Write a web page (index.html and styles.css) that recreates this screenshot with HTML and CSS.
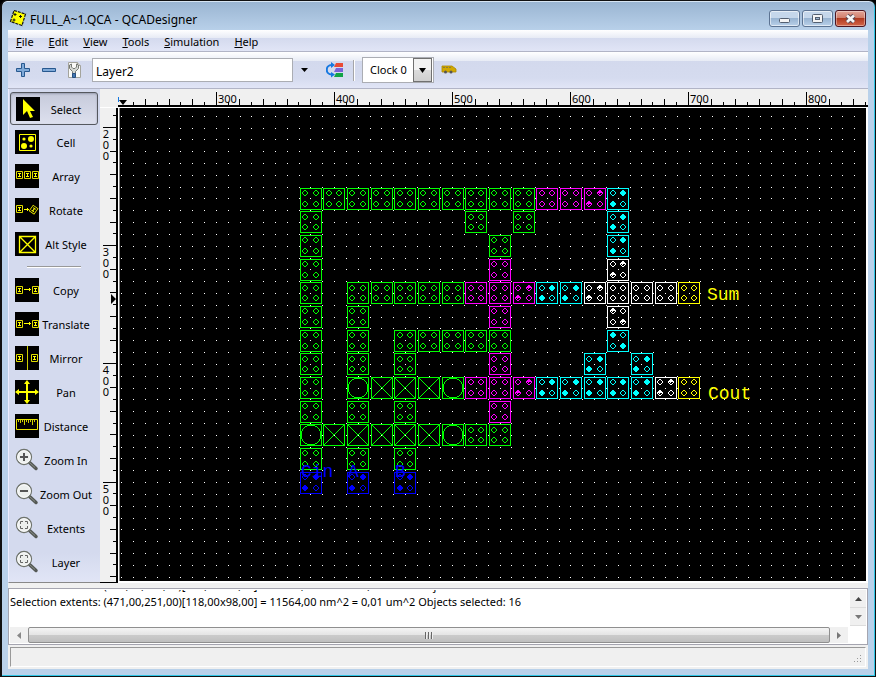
FILE: index.html
```html
<!DOCTYPE html>
<html lang="en">
<head>
<meta charset="utf-8">
<title>FULL_A~1.QCA - QCADesigner</title>
<link rel="stylesheet" href="styles.css">
</head>
<body>
<svg class="defs" aria-hidden="true">
  <symbol id="mini" viewBox="0 0 7 8"><path d="M.5 .5h6v7h-6z" fill="none" stroke="#e0dc00"/><path d="M2 2h3v1h-1v2h1v1h-3v-1h1v-2h-1z" fill="#ff0"/></symbol>
  <symbol id="lens" viewBox="0 0 24 24">
    <path d="M14.5 14.5l6.500 6" stroke="#555955" stroke-width="3.500" stroke-linecap="round"/>
    <path d="M15 15l5 4.500" stroke="#888d86" stroke-width="1"/>
    <circle cx="9" cy="9" r="7.500" fill="#ecefed" stroke="#6f746d" stroke-width="1.300"/>
    <circle cx="9" cy="9" r="6.300" fill="none" stroke="#fff"/>
  </symbol>
</svg>
<div class="window">
  <header class="titlebar">
    <svg class="logo" width="18" height="18" viewBox="0 0 18 18"><path d="M5 1.500L16.500 5 13 16.500 1.500 12.500z" fill="#ff0" stroke="#111" stroke-width="1.200" stroke-dasharray="3 1"/><path d="M6 4v3M4.500 5.500h3M11.500 6v3M10 7.500h3M5 9.500v3M3.500 11h3" stroke="#111"/></svg>
    <h1>FULL_A~1.QCA - QCADesigner</h1>
    <div class="controls">
      <button aria-label="Minimize"><svg width="29" height="15"><rect x="9.500" y="7.500" width="10" height="4" rx="1" fill="#f4f4f4" stroke="#535f70"/></svg></button>
      <button aria-label="Maximize"><svg width="29" height="15"><rect x="9.500" y="3.500" width="10" height="8" rx="1" fill="#f4f4f4" stroke="#535f70"/><rect x="12.500" y="6.500" width="4" height="2" fill="#9db5d0" stroke="#535f70"/></svg></button>
      <button class="close" aria-label="Close"><svg width="29" height="15"><path d="M11 4.500l7 6.500M18 4.500l-7 6.500" stroke="#5a4a56" stroke-width="4.500"/><path d="M11 4.500l7 6.500M18 4.500l-7 6.500" stroke="#f6f6f6" stroke-width="2.700"/></svg></button>
    </div>
  </header>
  <div class="client">
    <nav class="menubar">
      <a href="#"><u>F</u>ile</a><a href="#"><u>E</u>dit</a><a href="#"><u>V</u>iew</a><a href="#"><u>T</u>ools</a><a href="#"><u>S</u>imulation</a><a href="#"><u>H</u>elp</a>
    </nav>
    <div class="toolbar">
      <button class="flat" aria-label="Add layer"><svg width="16" height="16"><path d="M6.500 1.500h3v5h5v3h-5v5h-3v-5h-5v-3h5z" fill="#7fa9d8" stroke="#27588f"/></svg></button>
      <button class="flat" aria-label="Remove layer"><svg width="16" height="16"><path d="M1.500 6.500h13v3h-13z" fill="#7fa9d8" stroke="#27588f"/></svg></button>
      <button class="flat" aria-label="Layer properties"><svg width="16" height="18"><path d="M1.500 1.500h9l3 3v12h-12z" fill="#fafaf8" stroke="#a4a49c"/><path d="M10.500 1.500v3h3" fill="#ddd" stroke="#a4a49c"/><path d="M2.500 4v3.500l3 3v2h3v-2l3-3V4l-2-1v3L8 7.500H6L4.500 6V3z" fill="#d5d8d4" stroke="#777a75"/><path d="M5.500 12.500h3v4h-3z" fill="#4477b0" stroke="#274f80"/></svg></button>
      <input class="layer" aria-label="Layer" value="Layer2">
      <button class="flat arrow" aria-label="Choose layer"><svg width="7" height="4"><path d="M0 0h7L3.500 4z"/></svg></button>
      <button class="flat sync" aria-label="Reorder layers"><svg width="18" height="16" viewBox="0 0 18 16"><path d="M10 1h7v4H8z" fill="#e94b35"/><path d="M10 6h7v4H8z" fill="#7a62d8"/><path d="M10 11h7v4H8z" fill="#12a346"/><path d="M5.500 3A4.500 4.500 0 0 0 5.500 12.500" fill="none" stroke="#1678e0" stroke-width="2"/><path d="M5 0l4 3-4 3zM5 10l4 2.500-4 3z" fill="#1678e0"/></svg></button>
      <span class="divider"></span>
      <div class="combo"><select aria-label="Clock"><option>Clock 0</option></select><span class="drop"><svg width="7" height="5"><path d="M0 0h7L3.500 5z"/></svg></span></div>
      <button class="flat" aria-label="Bus layout"><svg width="16" height="10"><path d="M1 1h10l4 3v3H1z" fill="#d2a800" stroke="#a98800" stroke-width=".8"/><path d="M2 2.500h2M5 2.500h2M8 2.500h2" stroke="#8c7d3a"/><circle cx="4.500" cy="7" r="1.500" fill="#555"/><circle cx="10" cy="7" r="1.500" fill="#555"/></svg></button>
    </div>
    <main class="work">
      <aside class="tools">
        <button class="selected"><svg class="ic" viewBox="0 0 24 24"><path d="M7 2v16l4-4 3 7 3-1-3-6h5z" fill="#ff0"/></svg><span>Select</span></button>
        <button><svg class="ic" viewBox="0 0 24 24"><path d="M4.500 4.500h16v16h-16z" fill="none" stroke="#ff0"/><circle cx="16" cy="9" r="3" fill="#ff0"/><circle cx="9" cy="16" r="3" fill="#ff0"/><circle cx="9" cy="9" r="1.600" fill="#ff0"/><circle cx="16" cy="16" r="1.600" fill="#ff0"/></svg><span>Cell</span></button>
        <button><svg class="ic" viewBox="0 0 24 24"><use href="#mini" x="1" y="7" width="7" height="8"/><use href="#mini" x="9" y="7" width="7" height="8"/><use href="#mini" x="17" y="7" width="7" height="8"/></svg><span>Array</span></button>
        <button><svg class="ic" viewBox="0 0 24 24"><use href="#mini" x="1" y="7" width="7" height="8"/><path d="M9 11.500h5M12.500 10v3" stroke="#ff0"/><use href="#mini" x="15" y="8" width="7" height="8" transform="rotate(35 19 12)"/></svg><span>Rotate</span></button>
        <button><svg class="ic" viewBox="0 0 24 24"><path d="M4.500 4.500h16v16h-16zl16 16m0-16l-16 16" fill="none" stroke="#ff0" stroke-width="1.300"/></svg><span>Alt Style</span></button>
        <hr>
        <button><svg class="ic" viewBox="0 0 24 24"><use href="#mini" x="1" y="8" width="7" height="8"/><path d="M9 11.500h7M14.500 10v3" stroke="#ff0"/><use href="#mini" x="17" y="8" width="7" height="8"/></svg><span>Copy</span></button>
        <button><svg class="ic" viewBox="0 0 24 24"><use href="#mini" x="1" y="8" width="7" height="8"/><path d="M9 11.500h7M14.500 10v3" stroke="#ff0"/><use href="#mini" x="17" y="8" width="7" height="8"/></svg><span>Translate</span></button>
        <button><svg class="ic" viewBox="0 0 24 24"><use href="#mini" x="1" y="8" width="7" height="8"/><path d="M12.500 0v24" stroke="#cc0"/><use href="#mini" x="16" y="8" width="7" height="8"/></svg><span>Mirror</span></button>
        <button><svg class="ic" viewBox="0 0 24 24"><path d="M12 2v20M2 12h20" stroke="#ff0" stroke-width="2"/><path d="M12 0l3 4H9zM12 24l3-4H9zM0 12l4-3v6zM24 12l-4-3v6z" fill="#ff0"/></svg><span>Pan</span></button>
        <button><svg class="ic" viewBox="0 0 24 24"><path d="M1.500 5.500h21v10h-21z" fill="none" stroke="#e8e400"/><path d="M3.500 6v2M5.500 6v3M7.500 6v2M9.500 6v5M11.500 6v2M13.500 6v3M15.500 6v2M17.500 6v5M19.500 6v2" stroke="#cc0"/></svg><span>Distance</span></button>
        <button><svg class="ic clear" viewBox="0 0 24 24"><use href="#lens"/><path d="M9 5v8M5 9h8" stroke="#555" stroke-width="2"/></svg><span>Zoom In</span></button>
        <button><svg class="ic clear" viewBox="0 0 24 24"><use href="#lens"/><path d="M5 9h8" stroke="#555" stroke-width="2"/></svg><span>Zoom Out</span></button>
        <button><svg class="ic clear" viewBox="0 0 24 24"><use href="#lens"/><path d="M5.500 8V5.500H8M10 5.500h2.500V8M12.500 10v2.500H10M8 12.500H5.500V10" fill="none" stroke="#666"/></svg><span>Extents</span></button>
        <button><svg class="ic clear" viewBox="0 0 24 24"><use href="#lens"/><path d="M5.500 8V5.500H8M10 5.500h2.500V8M12.500 10v2.500H10M8 12.500H5.500V10" fill="none" stroke="#666"/></svg><span>Layer</span></button>
      </aside>
      <div class="design">
        <svg id="hruler" class="hruler"></svg>
        <svg id="vruler" class="vruler"></svg>
        <div class="sheet"><svg id="sheet"></svg></div>
      </div>
    </main>
    <section class="log" aria-label="Messages">
      <div class="logrow">
        <div class="lines"><p>Selection extents: (471,00,251,00)[118,00x98,00] = 11564,00 nm^2 = 0,01 um^2 Objects selected: 16</p><p>Selection extents: (471,00,251,00)[118,00x98,00] = 11564,00 nm^2 = 0,01 um^2 Objects selected: 16</p></div>
        <div class="vscroll"><button aria-label="Scroll up"><svg width="7" height="4"><path d="M3.500 0L7 4H0z" fill="#444"/></svg></button><button aria-label="Scroll down"><svg width="7" height="4"><path d="M0 0h7L3.500 4z" fill="#777"/></svg></button></div>
      </div>
      <div class="hscroll"><button aria-label="Scroll left"><svg width="4" height="7"><path d="M4 0v7L0 3.500z" fill="#888"/></svg></button><div class="thumb"><i></i><i></i><i></i></div><button aria-label="Scroll right"><svg width="4" height="7"><path d="M0 0v7l4-3.500z" fill="#777"/></svg></button></div>
    </section>
    <footer class="status"><svg width="8" height="8"><path d="M6 0h1v1h-1zM3 3h1v1h-1zM6 3h1v1h-1zM0 6h1v1h-1zM3 6h1v1h-1zM6 6h1v1h-1z" fill="#999"/></svg></footer>
  </div>
</div>
<script src="design.js"></script>
</body>
</html>
```
FILE: styles.css
```css
* { box-sizing: border-box; }
body { margin: 0; background: #000; font: 11px/16px "Noto Sans", "Open Sans", sans-serif; color: #000; }
button { font: inherit; color: inherit; margin: 0; padding: 0; border: 0; background: none; }
svg { display: block; flex: none; }
.defs { position: absolute; width: 0; height: 0; }

.window {
  display: flex; flex-direction: column; min-height: 100vh;
  padding: 0 7px 7px 6px; border: 1px solid #111; border-left-width: 2px;
  border-radius: 7px 7px 0 0;
  background: linear-gradient(#99b4d1, #b9d1ea 30px);
  box-shadow: inset -1px -1px #2fc6e6, inset 0 1px #d7e5f3;
}
.titlebar { display: flex; align-items: center; height: 29px; padding: 4px 2px 0 1px; }
.titlebar .logo { margin-top: 1px; }
.titlebar h1 { flex: 1; margin: 4px 0 0 3px; font-size: 12px; font-weight: 400; }
.controls { display: flex; gap: 2px; margin-top: 2px; }
.controls button { border: 1px solid #5c7392; border-radius: 3px; box-shadow: inset 0 0 0 1px #ffffff90; background: linear-gradient(#c5d7eb 50%, #98b4d2 50%, #b9d0e9); }
.controls .close { border-color: #4d1520; background: linear-gradient(#e3a598, #cf7b68 50%, #b03a20 50%, #d4674a); box-shadow: inset 0 0 0 1px #ffffff60; }

.client { flex: 1; display: flex; flex-direction: column; background: #f0f0f0; }
.menubar, .toolbar { display: flex; align-items: center; border-bottom: 1px solid #b1b4c6; }
.menubar { height: 22px; padding: 2px 8px 0; gap: 15px; background: linear-gradient(#fff, #e7ebf5 8px, #d4daee 8px, #e1e5f6); }
.menubar a { color: #000; text-decoration: none; }
.toolbar { height: 37px; padding: 0 7px; background: linear-gradient(#fff, #e7ebf5 9px, #d3d9ed 9px, #d5dbef 26px, #e1e5f6); }
.toolbar .flat { margin-right: 10px; }
.toolbar .flat:nth-child(3) { margin-right: 9px; }
.layer { width: 201px; height: 24px; padding: 2px 3px 0; border: 1px solid #abadb3; background: #fff; font: inherit; font-size: 12px; }
.toolbar .arrow { margin: 0 18px 0 8px; }
.toolbar .sync { margin-right: 9px; }
.divider { width: 2px; height: 21px; margin-right: 7px; border-left: 1px solid #a5a5a8; border-right: 1px solid #fff; }
.combo { position: relative; width: 72px; height: 26px; margin-right: 7px; border: 1px solid #abadb3; background: #fff; }
.combo select { appearance: none; width: 100%; height: 100%; padding: 0 0 0 7px; border: 0; background: none; font: inherit; color: #000; }
.drop { position: absolute; inset: 0 1px 0 auto; width: 19px; display: grid; place-items: center; border: 1px solid #707070; background: linear-gradient(#f2f2f2 50%, #dcdcdc 50%, #cfcfcf); pointer-events: none; }

.work { flex: 1; display: flex; }
.tools { width: 92px; padding: 3px 2px 3px 1px; background: linear-gradient(#d4daee 94%, #e1e5f6); border-left: 1px solid #eef; border-bottom: 1px solid #888; }
.tools button { display: flex; align-items: center; width: 100%; height: 34px; padding: 0 5px; }
.tools .ic { width: 24px; height: 24px; background: #000; }
.tools .clear { background: none; }
.tools span { flex: 1; padding-top: 2px; text-align: center; white-space: nowrap; }
.tools .selected { height: 33px; border: 1px solid #55585f; border-radius: 3px; background: linear-gradient(#c6cadb, #dde0ee); box-shadow: inset 0 1px 2px #999eb0; }
.tools hr { height: 2px; margin: 5px 17px; border: 0; border-top: 1px solid #999; border-bottom: 1px solid #fff; }

.design { flex: 1; min-width: 0; display: grid; grid-template: 18px 1fr / 18px 1fr; }
.hruler { grid-column: 2; width: 100%; height: 18px; }
.vruler { grid-row: 2; width: 18px; height: 100%; border-top: 1px solid #fff; border-bottom: 1px solid #000; }
.vruler text { text-anchor: middle; }
.sheet { display: flex; min-width: 0; padding-left: 1px; border: 1px solid #fff; border-width: 1px 2px 2px 1px; background: #888; }
.sheet svg { flex: 1; min-width: 0; height: auto; background: #000; }
#sheet text { font: 18px "Liberation Mono", monospace; }

.log { margin-top: 5px; height: 57px; padding: 1px; border: 1px solid #a5a5b0; background: #fff; }
.logrow { display: flex; height: 36px; }
.lines { flex: 1; overflow: hidden; }
.lines p { margin: 0; white-space: nowrap; }
.lines p:first-child { margin-top: -12px; }
.vscroll { width: 16px; background: #f0f0f0; }
.vscroll button { display: grid; place-items: center; width: 100%; height: 18px; border-bottom: 1px solid #ddd; }
.hscroll { display: flex; height: 16px; margin: 1px 18px 0 0; background: #f0f0f0; }
.hscroll button { display: grid; place-items: center; width: 18px; }
.thumb { flex: 1; display: flex; gap: 1px; align-items: center; justify-content: center; border: 1px solid #8f8f8f; border-radius: 2px; background: linear-gradient(#f4f4f4, #e4e4e4 50%, #cbcbcb 50%, #bfbfbf); }
.thumb i { width: 2px; height: 7px; background: #666; border-right: 1px solid #eee; }
.status { display: flex; align-items: flex-end; justify-content: flex-end; height: 20px; margin: 2px; padding: 3px; border: 1px solid; border-color: #999 #fff #fff #999; }
```
FILE: design.js
```js
const NS = 'http://www.w3.org/2000/svg';
const el = (parent, tag, attrs, text) => {
  const node = document.createElementNS(NS, tag);
  for (const k in attrs) node.setAttribute(k, attrs[k]);
  if (text) node.textContent = text;
  parent.appendChild(node);
};
const path = (parent, d, attrs) => el(parent, 'path', { d, ...attrs });

// Rulers: one tick every 10 nm, numbered every 100 nm.
const h = document.getElementById('hruler');
const v = document.getElementById('vruler');
const width = h.getBoundingClientRect().width;
const height = v.getBoundingClientRect().height;
const tickLength = n => n % 10 === 0 ? 13 : n % 2 === 0 ? 6 : 3;
let hd = '', vd = '';
for (let n = -7, x; (x = Math.floor(98.3 + 11.8 * n)) < width; n++) {
  const len = tickLength(n);
  hd += `M${x} ${16 - len}h1v${len}h-1z`;
  if (n % 10 === 0) el(h, 'text', { x: x + 2, y: 14 }, String(300 + n * 10));
}
for (let n = -1, y; (y = Math.floor(19.5 + 11.82 * n)) < height; n++) {
  const len = tickLength(n);
  vd += `M${16 - len} ${y}h${len}v1h-${len}z`;
  if (n % 10 === 0) [...String(200 + n * 10)].forEach((c, i) => el(v, 'text', { x: 6, y: y + 11 + i * 11 }, c));
}
path(h, hd + 'M0 16h4000v2H0zM1 11h8l-4 5z');
path(h, 'M0 8h1v5h-1z', { fill: '#1678e0' });
path(v, vd + 'M16 0h2v3000h-2zM11 186l5 5-5 5z');

// Design sheet.
const s = document.getElementById('sheet');
let dots = '';
for (let i = 0; i * 11.82 < width; i++)
  for (let j = 0; j * 11.82 < height; j++)
    dots += `M${Math.floor(1.8 + 11.82 * i)} ${Math.floor(8.18 + 11.82 * j)}h1v1h-1z`;
const cols = [180, 203, 227, 251, 274, 298, 322, 345, 369, 393, 416, 440, 464, 487, 511, 535, 558];
const rows = [80, 103, 127, 151, 174, 198, 222, 245, 269, 293, 316, 340, 364];
const colors = { g: '#0f0', o: '#0f0', x: '#0f0', m: '#f0f', M: '#f0f', c: '#0ff', C: '#0ff', w: '#fff', W: '#fff', V: '#fff', y: '#ff0', b: '#00f' };
const layout = [
  'ggggggggggmmMc...',
  'g......g.g...c...',
  'g.......g....c...',
  'g.......m....W...',
  'g.gggggmmMccWwwwy',
  'g.g.....m....V...',
  'g.g.ggggg....C...',
  'g.g.g...m...c.c..',
  'g.oxxxommMcccccWy',
  'g.g.g...m........',
  'oxxxxxogg........',
  'g.g.g............',
  'b.b.b............'
];
const ring = 'M2 0h2v1h-2zM1 1h1v1h-1zM4 1h1v1h-1zM0 2h1v2h-1zM5 2h1v2h-1zM1 4h1v1h-1zM4 4h1v1h-1zM2 5h2v1h-2z';
const full = 'M2 0h2v1h1v1h1v2h-1v1h-1v1h-2v-1h-1v-1h-1v-2h1v-1h1z';
const part = ring + 'M2 1h2v1h1v1h-2v1h-1v-1h-1v-1h1z';
layout.forEach((line, r) => [...line].forEach((t, c) => {
  if (t === '.') return;
  const g = document.createElementNS(NS, 'g');
  g.setAttribute('transform', `translate(${cols[c]} ${rows[r]})`);
  s.appendChild(g);
  const color = colors[t];
  el(g, 'rect', { x: .5, y: .5, width: 21, height: 21, fill: 'none', stroke: color });
  if (t === 'o') return el(g, 'circle', { cx: 11, cy: 11, r: 10, fill: 'none', stroke: color, 'shape-rendering': 'crispEdges' });
  if (t === 'x') return path(g, 'M1 1l20 20M21 1l-20 20', { stroke: color, 'shape-rendering': 'crispEdges' });
  const xs = [c % 3 === 1 ? 3 : 2, 13], ys = [r % 3 === 1 ? 3 : 2, 13];
  const diagonal = 'CV'.includes(t) ? 0 : 1;
  ys.forEach((y, j) => xs.forEach((x, i) => {
    const charged = (i + j) % 2 === diagonal;
    const shape = charged && 'cCb'.includes(t) ? full : charged && 'MWV'.includes(t) ? part : ring;
    path(g, shape, { fill: color, transform: `translate(${x} ${y})` });
  }));
}));
path(s, dots, { fill: '#fff' });
el(s, 'text', { x: 587, y: 192, fill: '#ff0' }, 'Sum');
el(s, 'text', { x: 588, y: 291, fill: '#ff0' }, 'Cout');
el(s, 'text', { x: 181, y: 369, fill: '#00f' }, 'Cin');
el(s, 'text', { x: 228, y: 369, fill: '#00f' }, 'A');
el(s, 'text', { x: 275, y: 369, fill: '#00f' }, 'B');
```
